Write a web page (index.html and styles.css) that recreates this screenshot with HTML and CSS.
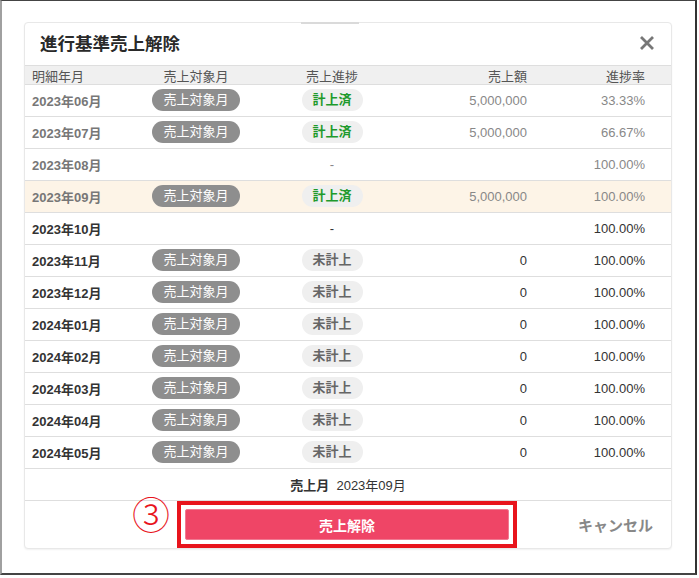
FILE: index.html
```html
<!DOCTYPE html>
<html lang="ja">
<head>
<meta charset="utf-8">
<title>進行基準売上解除</title>
<link rel="stylesheet" href="styles.css">
</head>
<body>
<div class="frame">
  <div class="modal">
    <div class="topmark"></div>
    <div class="title-bar">
      <h1 class="title">進行基準売上解除</h1>
      <svg class="close" width="16" height="16" viewBox="0 0 16 16"><path d="M2 2 L14 14 M14 2 L2 14" stroke="#777" stroke-width="2.8" stroke-linecap="butt" fill="none"/></svg>
    </div>
    <div class="row head">
      <div class="c1">明細年月</div>
      <div class="c2">売上対象月</div>
      <div class="c3">売上進捗</div>
      <div class="c4">売上額</div>
      <div class="c5">進捗率</div>
    </div>
    <div class="row past">
      <div class="c1 month">2023年06月</div>
      <div class="c2"><span class="pill target">売上対象月</span></div>
      <div class="c3"><span class="pill done">計上済</span></div>
      <div class="c4">5,000,000</div>
      <div class="c5">33.33%</div>
    </div>
    <div class="row past">
      <div class="c1 month">2023年07月</div>
      <div class="c2"><span class="pill target">売上対象月</span></div>
      <div class="c3"><span class="pill done">計上済</span></div>
      <div class="c4">5,000,000</div>
      <div class="c5">66.67%</div>
    </div>
    <div class="row past">
      <div class="c1 month">2023年08月</div>
      <div class="c2"></div>
      <div class="c3">-</div>
      <div class="c4"></div>
      <div class="c5">100.00%</div>
    </div>
    <div class="row past selected">
      <div class="c1 month">2023年09月</div>
      <div class="c2"><span class="pill target">売上対象月</span></div>
      <div class="c3"><span class="pill done">計上済</span></div>
      <div class="c4">5,000,000</div>
      <div class="c5">100.00%</div>
    </div>
    <div class="row">
      <div class="c1 month">2023年10月</div>
      <div class="c2"></div>
      <div class="c3">-</div>
      <div class="c4"></div>
      <div class="c5">100.00%</div>
    </div>
    <div class="row">
      <div class="c1 month">2023年11月</div>
      <div class="c2"><span class="pill target">売上対象月</span></div>
      <div class="c3"><span class="pill todo">未計上</span></div>
      <div class="c4">0</div>
      <div class="c5">100.00%</div>
    </div>
    <div class="row">
      <div class="c1 month">2023年12月</div>
      <div class="c2"><span class="pill target">売上対象月</span></div>
      <div class="c3"><span class="pill todo">未計上</span></div>
      <div class="c4">0</div>
      <div class="c5">100.00%</div>
    </div>
    <div class="row">
      <div class="c1 month">2024年01月</div>
      <div class="c2"><span class="pill target">売上対象月</span></div>
      <div class="c3"><span class="pill todo">未計上</span></div>
      <div class="c4">0</div>
      <div class="c5">100.00%</div>
    </div>
    <div class="row">
      <div class="c1 month">2024年02月</div>
      <div class="c2"><span class="pill target">売上対象月</span></div>
      <div class="c3"><span class="pill todo">未計上</span></div>
      <div class="c4">0</div>
      <div class="c5">100.00%</div>
    </div>
    <div class="row">
      <div class="c1 month">2024年03月</div>
      <div class="c2"><span class="pill target">売上対象月</span></div>
      <div class="c3"><span class="pill todo">未計上</span></div>
      <div class="c4">0</div>
      <div class="c5">100.00%</div>
    </div>
    <div class="row">
      <div class="c1 month">2024年04月</div>
      <div class="c2"><span class="pill target">売上対象月</span></div>
      <div class="c3"><span class="pill todo">未計上</span></div>
      <div class="c4">0</div>
      <div class="c5">100.00%</div>
    </div>
    <div class="row">
      <div class="c1 month">2024年05月</div>
      <div class="c2"><span class="pill target">売上対象月</span></div>
      <div class="c3"><span class="pill todo">未計上</span></div>
      <div class="c4">0</div>
      <div class="c5">100.00%</div>
    </div>
    <div class="summary"><b>売上月</b>&nbsp;&nbsp;2023年09月</div>
    <div class="actions">
      <span class="step">③</span>
      <div class="highlight"><button class="btn-release">売上解除</button></div>
      <button class="btn-cancel">キャンセル</button>
    </div>
  </div>
</div>
</body>
</html>
```

FILE: styles.css
```css
* { box-sizing: border-box; }
html, body { margin: 0; padding: 0; background: #fff; }
body {
  font-family: "Liberation Sans", "Noto Sans CJK JP", sans-serif;
  font-size: 13px;
  color: #333;
}
.frame {
  width: 697px;
  height: 575px;
  border-top: 1px solid #444;
  border-left: 2px solid #a0a0a0;
  border-right: 2px solid #333;
  border-bottom: 2px solid #444;
  padding: 21px 0 0 22px;
}
.modal {
  position: relative;
  width: 648px;
  border: 1px solid #e8e8e8;
  border-radius: 4px;
  box-shadow: 0 1px 2px rgba(0,0,0,0.06);
  background: #fff;
}
.topmark {
  position: absolute;
  top: -1px;
  left: 276px;
  width: 58px;
  height: 2px;
  background: #dadada;
}
.title-bar {
  height: 42px;
  display: flex;
  align-items: center;
  justify-content: space-between;
  padding: 0 16px 3px 15px;
}
.title {
  margin: 0;
  font-size: 17.5px;
  font-weight: bold;
  color: #2a2a2a;
}
.close { display: block; margin-top: 1px; }
.row {
  display: grid;
  grid-template-columns: 105px 132px 140px 133px 136px;
  align-items: center;
  height: 32px;
  padding-bottom: 1px;
  border-bottom: 1px solid #dedede;
  color: #333;
}
.row.head {
  height: 20px;
  padding-bottom: 2px;
  background: #f0f0f0;
  border-top: 1px solid #dedede;
  color: #555;
}
.c1 { padding-left: 7px; }
.c2, .c3 { text-align: center; }
.c4 { text-align: right; padding-right: 8px; }
.c5 { text-align: right; padding-right: 26px; }
.month { font-weight: bold; }
.row.past { color: #888; }
.row.past .month { color: #777; }
.row.selected { background: #fdf4e7; }
.pill {
  display: inline-block;
  height: 22px;
  line-height: 22px;
  border-radius: 11px;
  vertical-align: middle;
}
.pill.target {
  width: 88px;
  background: #8e8e8e;
  color: #fff;
}
.pill.done, .pill.todo {
  width: 61px;
  background: #efefef;
  font-weight: bold;
}
.pill.done { color: #1f9a2c; }
.pill.todo { color: #666; }
.summary {
  height: 32px;
  padding-bottom: 1px;
  display: flex;
  align-items: center;
  justify-content: center;
  border-bottom: 1px solid #dedede;
  color: #333;
}
.summary b { font-weight: bold; }
.actions {
  display: flex;
  align-items: center;
  height: 47px;
  padding-left: 107px;
}
.step {
  width: 36px;
  margin-right: 9px;
  margin-top: -24px;
  color: #e8141c;
  font-family: "Noto Sans CJK JP", sans-serif;
  font-weight: 300;
  font-size: 38px;
  line-height: 38px;
  text-align: center;
}
.highlight {
  border: 4px solid #e8141c;
  padding: 4px;
  height: 47px;
  width: 340px;
  background: #fff;
}
.btn-release {
  display: block;
  width: 100%;
  height: 31px;
  border: 1px solid #f07a92;
  border-radius: 2px;
  background: #ef4566;
  color: #fff;
  font-family: inherit;
  font-size: 14px;
  font-weight: bold;
  padding: 0;
}
.btn-cancel {
  margin-left: 61px;
  border: 0;
  background: none;
  padding: 0;
  font-family: inherit;
  font-size: 15px;
  font-weight: bold;
  color: #888;
}
```
